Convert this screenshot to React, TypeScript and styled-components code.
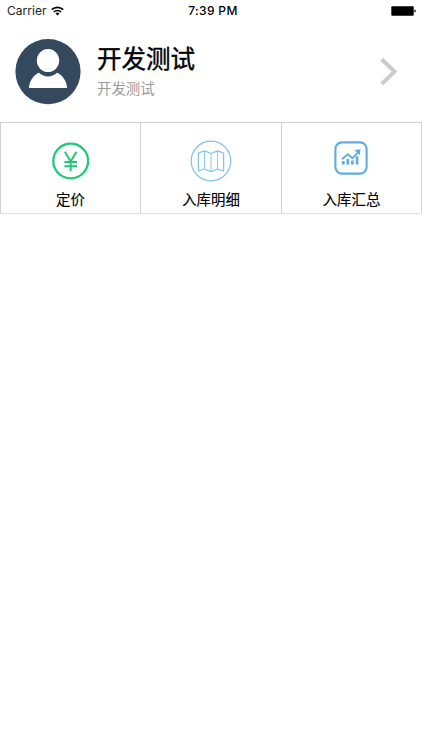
import React from "react";
import styled, { createGlobalStyle } from "styled-components";

const GlobalStyle = createGlobalStyle`
  * { box-sizing: border-box; }
  html, body, #root { height: 100%; }
  body {
    margin: 0;
    background: #fff;
    color: #000;
    font-family: Inter, "Noto Sans CJK SC", sans-serif;
    overflow: hidden;
  }
  svg { display: block; flex: none; }
`;

const Screen = styled.div`
  display: flex;
  flex-direction: column;
  height: 100%;
`;

const StatusBar = styled.header`
  display: grid;
  grid-template-columns: 1fr auto 1fr;
  align-items: center;
  height: 22px;
  padding: 0 6px 0 7px;
  font-size: 12px;
  line-height: 22px;
`;

const Carrier = styled.div`
  display: flex;
  align-items: center;
  gap: 5px;
  color: #222;
  letter-spacing: 0.02px;
`;

const Clock = styled.div`
  font-weight: 500;
  letter-spacing: 0.35px;
  padding-left: 3px;
`;

const BatterySlot = styled.div`
  display: flex;
  justify-content: flex-end;
`;

const Profile = styled.section`
  display: flex;
  align-items: center;
  height: 100px;
  padding: 0 23px 0 15px;
`;

const Identity = styled.div`
  flex: 1;
  margin: -3px 0 0 16px;
`;

const Name = styled.h1`
  margin: 0;
  font-size: 24.5px;
  font-weight: 400;
  line-height: 34px;
  -webkit-text-stroke: 0.4px #000;
`;

const Subtitle = styled.p`
  margin: 2px 0 0;
  font-size: 14.4px;
  line-height: 22px;
  color: #9b9b9b;
`;

const Menu = styled.nav`
  display: grid;
  grid-template-columns: 139px 141px 140px;
  height: 92px;
  border: 1px solid #d0d0d0;
  border-bottom-color: #dedede;
`;

const MenuItem = styled.a`
  display: flex;
  flex-direction: column;
  align-items: center;
  & + & { border-left: 1px solid #d0d0d0; }
`;

const IconSlot = styled.div<{ $shift?: number }>`
  display: flex;
  align-items: center;
  justify-content: center;
  height: 65px;
  padding-top: ${(p) => 11 + (p.$shift ?? 0)}px;
`;

const Label = styled.span`
  font-size: 14.4px;
  line-height: 23px;
  -webkit-text-stroke: 0.15px #000;
`;

const Wifi = () => (
  <svg width="13" height="10" viewBox="0 0 13 10" fill="none" stroke="#000" strokeWidth="1.7">
    <path d="M.8 3.7a8.1 8.1 0 0 1 11.4 0" />
    <path d="M2.9 6a5.1 5.1 0 0 1 7.2 0" />
    <path d="M6.5 9.4 4.5 7.4a2.8 2.8 0 0 1 4 0Z" fill="#000" stroke="none" />
  </svg>
);

const Battery = () => (
  <svg width="25" height="10" viewBox="0 0 25 10">
    <rect x=".3" y=".3" width="22.4" height="9.4" rx="1" fill="#000" />
    <path d="M23.4 3.4q1.4.4 1.4 1.6t-1.4 1.6Z" fill="#000" />
  </svg>
);

const Avatar = () => (
  <svg width="66" height="66" viewBox="0 0 66 66">
    <circle cx="33" cy="32.6" r="32.6" fill="#34495e" />
    <ellipse cx="33" cy="21.6" rx="11.2" ry="11.5" fill="#fff" />
    <path
      d="M13.9 49.1C14.3 42.6 18 36.3 24 33.8C26.1 35.8 29.3 37.5 33 37.5C36.7 37.5 39.9 35.8 42 33.8C48 36.3 51.7 42.6 52.2 49.1Z"
      fill="#fff"
    />
  </svg>
);

const Chevron = () => (
  <svg width="20" height="30" viewBox="0 0 20 30" fill="none" stroke="#cbcbcb" strokeWidth="4">
    <path d="m2.7 2.2 12.8 12.4L2.7 27" />
  </svg>
);

const Yen = () => (
  <svg width="38" height="38" viewBox="0 0 38 38" fill="none" stroke="#21c974" strokeWidth="2">
    <circle cx="18.7" cy="19" r="17.4" strokeWidth="2.3" />
    <path d="m12.9 9.7 5.8 9.8 5.8-9.8M18.7 19.4v9.5M12.4 20h12.6M12.4 24.3h12.6" />
  </svg>
);

const MapIcon = () => (
  <svg width="42" height="42" viewBox="0 0 42 42" fill="none" stroke="#86c2ec">
    <circle cx="21" cy="21" r="19.8" strokeWidth="1.2" />
    <path
      d="m8.4 13 6.1-2.1 6.5 2.6 6.5-2.6 6.1 2.1v18l-6.1-2-6.5 2.6-6.5-2.6-6.1 2Z"
      strokeWidth="1.3"
      strokeLinejoin="round"
    />
    <path d="M14.5 11v18M21 13.5v18M27.5 11v18" strokeWidth=".9" />
  </svg>
);

const Growth = () => (
  <svg width="34" height="34" viewBox="1 0 34 34" fill="none" stroke="#5dade2" overflow="visible">
    <rect x="1.4" y="1.4" width="31.2" height="31.2" rx="6.6" strokeWidth="2.1" />
    <path d="M9.3 20v3.6M13.8 18v5.6M18.4 19.4v4.2M23 15.2v8.4" strokeWidth="2.7" />
    <path d="m8 18.3 5.8-5 4.7 3.9 6-6.3" strokeWidth="1.8" />
    <path d="m20.4 9 6.1-.8-.7 6.1Z" fill="#5dade2" stroke="none" />
  </svg>
);

const items = [
  { label: "定价", icon: <Yen />, shift: 0 },
  { label: "入库明细", icon: <MapIcon />, shift: 0 },
  { label: "入库汇总", icon: <Growth />, shift: -6 },
];

export default function App() {
  return (
    <Screen>
      <GlobalStyle />
      <StatusBar>
        <Carrier>
          Carrier
          <Wifi />
        </Carrier>
        <Clock>7:39 PM</Clock>
        <BatterySlot>
          <Battery />
        </BatterySlot>
      </StatusBar>
      <Profile>
        <Avatar />
        <Identity>
          <Name>开发测试</Name>
          <Subtitle>开发测试</Subtitle>
        </Identity>
        <Chevron />
      </Profile>
      <Menu>
        {items.map(({ label, icon, shift }) => (
          <MenuItem key={label}>
            <IconSlot $shift={shift}>{icon}</IconSlot>
            <Label>{label}</Label>
          </MenuItem>
        ))}
      </Menu>
    </Screen>
  );
}
